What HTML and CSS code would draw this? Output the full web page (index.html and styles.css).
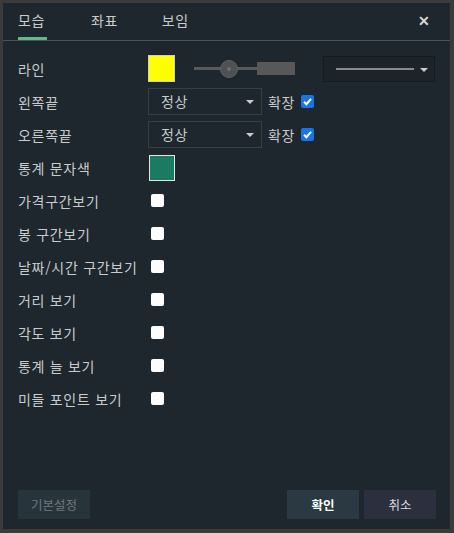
FILE: index.html
```html
<!DOCTYPE html>
<html lang="ko">
<head>
<meta charset="utf-8">
<link rel="stylesheet" href="styles.css">
</head>
<body>
<div class="dialog">
  <div class="tabs">
    <div class="tab active">모습</div>
    <div class="tab">좌표</div>
    <div class="tab">보임</div>
    <div class="close">✕</div>
  </div>
  <div class="content">
    <div class="row">
      <div class="label">라인</div>
      <div class="controls">
        <span class="swatch yellow"></span>
        <span class="slider"><span class="track"></span><span class="knob"></span><span class="block"></span></span>
        <span class="linesel"><span class="line"></span><span class="caret"></span></span>
      </div>
    </div>
    <div class="row">
      <div class="label">왼쪽끝</div>
      <div class="controls">
        <span class="select">정상<span class="caret"></span></span>
        <span class="ext">확장</span>
        <span class="cb checked"><svg viewBox="0 0 13 13" width="13" height="13"><path d="M3 6.8 L5.4 9.2 L10 3.8" fill="none" stroke="#fff" stroke-width="2"/></svg></span>
      </div>
    </div>
    <div class="row">
      <div class="label">오른쪽끝</div>
      <div class="controls">
        <span class="select">정상<span class="caret"></span></span>
        <span class="ext">확장</span>
        <span class="cb checked"><svg viewBox="0 0 13 13" width="13" height="13"><path d="M3 6.8 L5.4 9.2 L10 3.8" fill="none" stroke="#fff" stroke-width="2"/></svg></span>
      </div>
    </div>
    <div class="row">
      <div class="label">통계 문자색</div>
      <div class="controls"><span class="swatch teal"></span></div>
    </div>
    <div class="row"><div class="label">가격구간보기</div><div class="controls"><span class="cb"></span></div></div>
    <div class="row"><div class="label">봉 구간보기</div><div class="controls"><span class="cb"></span></div></div>
    <div class="row"><div class="label">날짜/시간 구간보기</div><div class="controls"><span class="cb"></span></div></div>
    <div class="row"><div class="label">거리 보기</div><div class="controls"><span class="cb"></span></div></div>
    <div class="row"><div class="label">각도 보기</div><div class="controls"><span class="cb"></span></div></div>
    <div class="row"><div class="label">통계 늘 보기</div><div class="controls"><span class="cb"></span></div></div>
    <div class="row"><div class="label">미들 포인트 보기</div><div class="controls"><span class="cb"></span></div></div>
  </div>
  <div class="footer">
    <button class="btn default">기본설정</button>
    <div class="spacer"></div>
    <button class="btn ok">확인</button>
    <button class="btn cancel">취소</button>
  </div>
</div>
</body>
</html>
```
FILE: styles.css
```css
* { box-sizing: border-box; }
html, body { margin: 0; padding: 0; background: #3b3b3b; }
body {
  font-family: "Noto Sans CJK KR", "Noto Sans", sans-serif;
  font-size: 14px;
  color: #c9cbcc;
}
.dialog {
  width: 454px;
  height: 533px;
  background: #1e272d;
  border-style: solid;
  border-color: #3b3b3b;
  border-width: 3px 4px 4px 3px;
  display: flex;
  flex-direction: column;
}
.tabs {
  display: flex;
  align-items: flex-start;
  height: 38px;
  border-bottom: 1px solid #48535b;
  padding-left: 15px;
  position: relative;
}
.tab {
  font-size: 14px;
  letter-spacing: 0.5px;
  color: #c9cbcc;
  height: 37px;
  line-height: 34px;
  margin-right: 44px;
  padding: 0;
}
.tab.active {
  border-bottom: 3px solid #5dbb8a;
  width: 29px;
}
.close {
  margin-left: auto;
  margin-right: 20px;
  font-size: 14px;
  line-height: 34px;
  color: #d8d8d8;
  font-weight: bold;
}
.content {
  padding: 11px 0 0 15px;
}
.row {
  display: flex;
  align-items: center;
  height: 33px;
}
.label {
  width: 130px;
  flex: none;
  white-space: nowrap;
  letter-spacing: 0.7px;
}
.controls {
  display: flex;
  align-items: center;
}
.swatch {
  width: 27px;
  height: 27px;
  border: 1px solid #d0d0c0;
  display: block;
}
.swatch.yellow { background: #ffff00; }
.swatch.teal { background: #1b7a62; width: 26px; height: 26px; margin-left: 1px; border-color: #dfe6e4; }
.slider {
  position: relative;
  width: 102px;
  height: 20px;
  margin-left: 19px;
  display: block;
}
.track {
  position: absolute;
  left: 0; top: 8px;
  width: 70px; height: 3px;
  background: #5a5a5a;
}
.knob {
  position: absolute;
  left: 26px; top: 1px;
  width: 18px; height: 18px;
  border-radius: 50%;
  background: #4f5254;
  border: 1px solid #5d6063;
}
.knob::after {
  content: "";
  position: absolute;
  left: 6px; top: 6px;
  width: 4px; height: 4px;
  border-radius: 50%;
  background: #6c6f71;
}
.block {
  position: absolute;
  left: 63px; top: 3px;
  width: 38px; height: 13px;
  background: #585858;
}
.linesel {
  margin-left: 27px;
  width: 112px;
  height: 26px;
  border: 1px solid #151b20;
  background: #1c2429;
  display: flex;
  align-items: center;
  padding-left: 12px;
  position: relative;
}
.line {
  width: 78px;
  height: 2px;
  background: #8a8a8a;
}
.caret {
  width: 0; height: 0;
  border-left: 4px solid transparent;
  border-right: 4px solid transparent;
  border-top: 4px solid #c8ccd0;
  position: absolute;
  right: 6px;
  top: 11px;
}
.select {
  position: relative;
  width: 114px;
  height: 27px;
  border: 1px solid #353f46;
  padding-left: 12px;
  line-height: 25px;
  letter-spacing: 0.7px;
  color: #c9cbcc;
  display: block;
}
.select .caret { right: 7px; top: 11px; }
.ext {
  margin-left: 6px;
  margin-right: 6px;
  letter-spacing: 0.7px;
}
.cb {
  width: 13px;
  height: 13px;
  background: #fdfdfd;
  border-radius: 2px;
  display: block;
  margin-left: 3px;
}
.cb.checked {
  background: #1a73e8;
  margin-left: 0;
}
.cb svg { display: block; }
.footer {
  margin-top: auto;
  display: flex;
  padding: 0 14px 10px 15px;
}
.spacer { flex: 1; }
.btn {
  font-family: inherit;
  font-size: 12.5px;
  width: 72px;
  height: 29px;
  border: none;
  padding: 0;
}
.btn.default { background: #28343b; color: #6f787e; }
.btn.ok { background: #2b3a42; color: #ffffff; font-weight: bold; margin-right: 5px; }
.btn.cancel { background: #2c2f3e; color: #d8dade; }
```
